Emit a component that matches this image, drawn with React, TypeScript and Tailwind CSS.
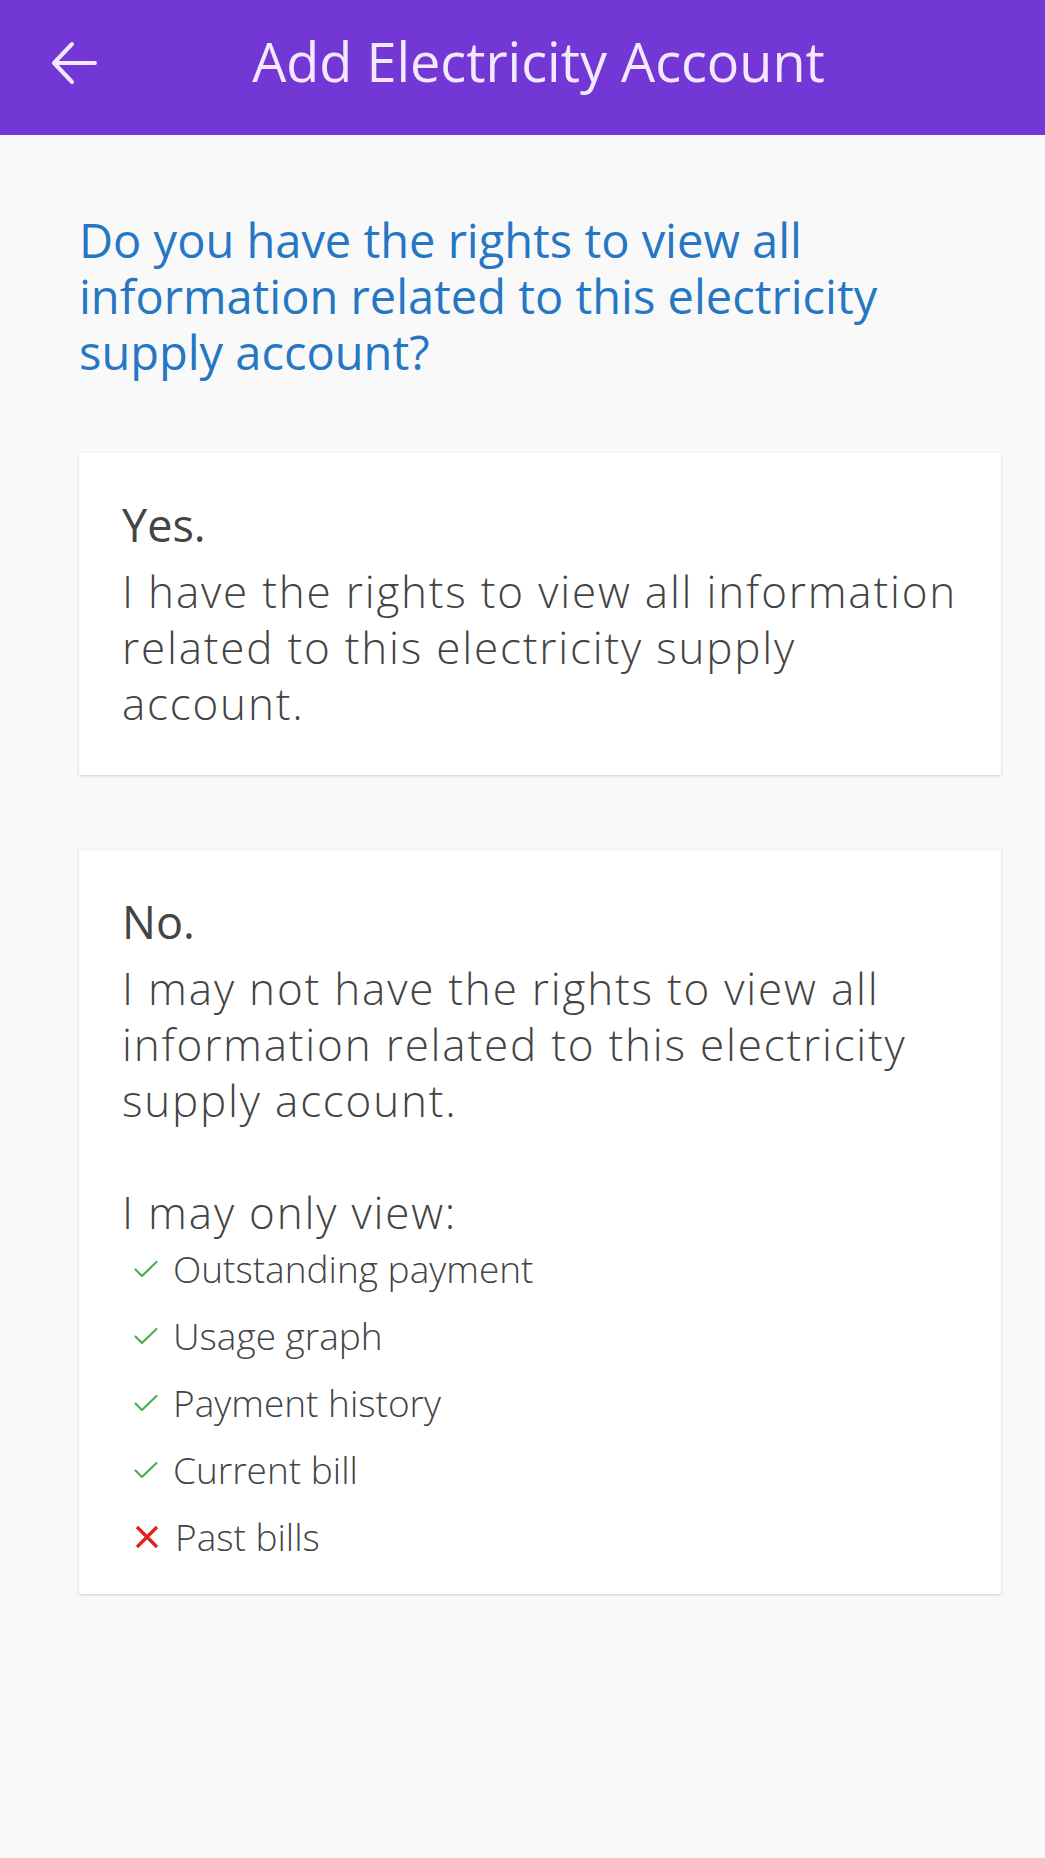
const items = [
  { label: "Outstanding payment", ok: true },
  { label: "Usage graph", ok: true },
  { label: "Payment history", ok: true },
  { label: "Current bill", ok: true },
  { label: "Past bills", ok: false },
];

const Check = () => (
  <svg width="28" height="28" viewBox="0 0 24 24" fill="none" stroke="#4caf50" strokeWidth="1.9" strokeLinecap="round" strokeLinejoin="round">
    <path d="M3 12.5l5.5 5.5L21 6" />
  </svg>
);

const Cross = () => (
  <svg width="30" height="30" viewBox="0 0 24 24" fill="none" stroke="#e0201b" strokeWidth="2.6">
    <path d="M4 4l16 16M20 4L4 20" />
  </svg>
);

const Back = () => (
  <svg width="46" height="44" viewBox="0 0 46 44" fill="none" stroke="#f3e8ff" strokeWidth="4" strokeLinecap="round" strokeLinejoin="round">
    <path d="M44 22H3M21 3L3 22l18 19" />
  </svg>
);

export default function App() {
  return (
    <div className="min-h-[1858px] bg-[#f9f9f9] font-['Open_Sans',sans-serif]">
      <header className="h-[135px] bg-[#7237d4] flex items-center relative">
        <button className="absolute left-[51px] top-[41px]">
          <Back />
        </button>
        <h1 className="w-full text-center text-[54px] text-[#f3e8ff] pl-[32px] pb-[12px]">
          Add Electricity Account
        </h1>
      </header>

      <main className="pl-[79px] pr-[44px] pt-[77px]">
        <h2 className="text-[47px] leading-[56px] text-[#2677c3] pr-[60px]">
          Do you have the rights to view all information related to this electricity supply account?
        </h2>

        <div className="mt-[73px] bg-white shadow-[0_1px_3px_rgba(0,0,0,0.18)] pl-[43px] pr-[28px] pt-[44px] pb-[44px]">
          <p className="text-[45px] leading-[56px] text-[#444]">Yes.</p>
          <p className="text-[44px] leading-[56px] tracking-[1.8px] text-[#444] font-light mt-[10px]">
            I have the rights to view all information related to this electricity supply account.
          </p>
        </div>

        <div className="mt-[75px] bg-white shadow-[0_1px_3px_rgba(0,0,0,0.18)] pl-[43px] pr-[28px] pt-[44px] pb-[24px]">
          <p className="text-[45px] leading-[56px] text-[#444]">No.</p>
          <p className="text-[44px] leading-[56px] tracking-[1.8px] text-[#444] font-light mt-[10px] pr-[40px]">
            I may not have the rights to view all information related to this electricity supply account.
          </p>
          <p className="text-[44px] leading-[56px] tracking-[1.8px] text-[#444] font-light mt-[56px]">I may only view:</p>
          <ul className="pl-[10px] -mt-[5px]">
            {items.map((it) => (
              <li key={it.label} className="flex items-center gap-[13px] h-[67px] text-[37px] text-[#444] font-light">
                {it.ok ? <Check /> : <Cross />}
                <span>{it.label}</span>
              </li>
            ))}
          </ul>
        </div>
      </main>
    </div>
  );
}
